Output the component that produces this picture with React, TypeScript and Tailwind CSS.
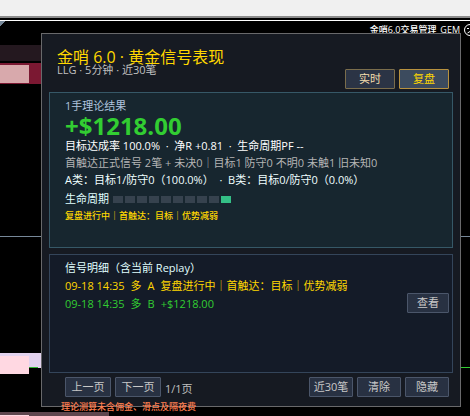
import { useState } from "react";

interface Signal {
  id: number;
  time: string;
  side: string;
  grade: string;
  result: string;
  color: string;
}

const signals: Signal[] = [
  {
    id: 1,
    time: "09-18 14:35",
    side: "多",
    grade: "A",
    result: "复盘进行中｜首触达：目标｜优势减弱",
    color: "text-[#ffd700]",
  },
  {
    id: 2,
    time: "09-18 14:35",
    side: "多",
    grade: "B",
    result: "+$1218.00",
    color: "text-[#32cd32]",
  },
];

const LIFECYCLE_STEPS = 10;

const buttonBase = "h-5 border rounded-[1px] text-[11px] leading-[18px] text-center";
const buttonPlain = "border-[#4b566a] bg-[#283142] text-[#c8c8c8]";

function ChartBackdrop() {
  return (
    <svg
      className="absolute inset-0 w-full h-full"
      shapeRendering="crispEdges"
      aria-hidden="true"
    >
      <rect x="0" y="20" width="100%" height="1" fill="#ffffff" />
      <path d="M0 21h5l-5 5z" fill="#778899" />
      <rect x="0" y="45" width="60" height="16" fill="#24181f" />
      <rect x="0" y="63" width="60" height="21" fill="#7b1832" />
      <rect x="0" y="65" width="29" height="18" fill="#d8a9ac" />
      <rect x="0" y="236" width="100%" height="1" fill="#778899" />
      <rect x="0" y="353" width="60" height="15" fill="#e2d2ee" />
      <rect x="29" y="367" width="9" height="1" fill="#32b432" />
      <rect x="0" y="356" width="29" height="18" fill="#ffd8e2" />
      <rect x="400" y="367" width="100%" height="1" fill="#32cd32" />
      <rect x="0" y="412" width="109" height="4" fill="#5f464e" />
      <rect x="0" y="415" width="29" height="1" fill="#ffd8e2" />
    </svg>
  );
}

export default function App() {
  const [mode, setMode] = useState("replay");

  const modeClass = (name: string) =>
    mode === name
      ? "border-[#b8923f] bg-[#3c4b5e] text-[#ffd700]"
      : "border-[#7a6d4c] bg-[#2b3445] text-[#f5dfae]";

  return (
    <div className="relative min-h-screen overflow-hidden bg-black font-['Open_Sans','Noto_Sans_CJK_SC',sans-serif] text-[11px]">
      <ChartBackdrop />

      {/* Window toolbar */}
      <div className="relative h-[18px] border-b-2 border-[#8c8c8c] bg-[#f0f0f0]" />

      {/* Expert advisor name */}
      <div className="relative flex h-[15px] items-center justify-end gap-1 pt-[9px] pl-10 text-[9px] leading-3 font-medium whitespace-nowrap text-white">
        <span>金哨6.0交易管理_GEM</span>
        <svg width="12" height="12" viewBox="0 0 12 12" fill="none" stroke="#fff" className="-mr-[6px]">
          <circle cx="6" cy="6" r="5.5" />
          <path d="M3 4.5h2M7 4.5h2M3.5 9q2.5-3 5 0" />
        </svg>
      </div>

      <main className="relative mr-[9px] ml-[41px] border border-[#69696b] bg-[#161a22] px-[7px] pb-[9px]">
        <header className="flex h-[58px] items-end justify-between pr-1 pb-[3px] pl-2">
          <div className="self-start pt-[13px]">
            <h1 className="text-base leading-5 text-[#ffd700]">金哨 6.0 · 黄金信号表现</h1>
            <p className="-mt-[5px] leading-4 text-[#c0c0c0]">LLG · 5分钟 · 近30笔</p>
          </div>
          <div className="flex gap-1">
            <button
              type="button"
              onClick={() => setMode("live")}
              className={`${buttonBase} w-[50px] ${modeClass("live")}`}
            >
              实时
            </button>
            <button
              type="button"
              onClick={() => setMode("replay")}
              className={`${buttonBase} w-[50px] ${modeClass("replay")}`}
            >
              复盘
            </button>
          </div>
        </header>

        {/* Summary */}
        <section className="h-[156px] border border-[#365867] bg-[#17262f] px-[15px] pt-1 whitespace-nowrap">
          <h2 className="leading-[18px] text-[#b0c4de]">1手理论结果</h2>
          <p className="text-2xl leading-[22px] font-bold text-[#32cd32]">+$1218.00</p>
          <p className="leading-[17px] text-white">
            目标达成率 100.0% &nbsp;·&nbsp; 净R +0.81 &nbsp;·&nbsp; 生命周期PF --
          </p>
          <p className="leading-[17px] text-[#b4b4b4]">
            首触达正式信号 2笔 + 未决0｜目标1 防守0 不明0 未触1 旧未知0
          </p>
          <p className="leading-[17px] text-[#f0ffff]">
            A类：目标1/防守0（100.0%） &nbsp;·&nbsp; B类：目标0/防守0（0.0%）
          </p>
          <div className="flex items-center gap-1 pt-[2px]">
            <span className="leading-[18px] text-[#e0ffff]">生命周期</span>
            <div className="flex gap-[2px]">
              {Array.from({ length: LIFECYCLE_STEPS }, (_, i) => (
                <span
                  key={i}
                  className={`h-[7px] w-[10px] ${i === LIFECYCLE_STEPS - 1 ? "bg-[#34bf86]" : "bg-[#36424e]"}`}
                />
              ))}
            </div>
          </div>
          <p className="text-[9px] leading-4 font-medium text-[#ffd700]">
            复盘进行中｜首触达：目标｜优势减弱
          </p>
        </section>

        {/* Signal list */}
        <section className="mt-[6px] h-[119px] border border-[#34455a] bg-[#141b28] pt-1 pr-[3px] pl-[15px] whitespace-nowrap">
          <h2 className="leading-[18px] text-[#e0ffff]">信号明细（含当前 Replay）</h2>
          <div className="flex justify-between">
            <ul>
              {signals.map((s) => (
                <li key={s.id} className={`flex gap-[6px] leading-[18px] ${s.color}`}>
                  <span>{s.time}</span>
                  <span>{s.side}</span>
                  <span>{s.grade}</span>
                  <span>{s.result}</span>
                </li>
              ))}
            </ul>
            <button type="button" className={`${buttonBase} ${buttonPlain} mt-4 w-[42px]`}>
              查看
            </button>
          </div>
        </section>

        <footer className="flex items-center gap-1 pt-1 pr-1 pl-4 whitespace-nowrap">
          <button type="button" className={`${buttonBase} ${buttonPlain} w-[46px]`}>
            上一页
          </button>
          <button type="button" className={`${buttonBase} ${buttonPlain} w-[46px]`}>
            下一页
          </button>
          <span className="mr-auto pt-1 leading-4 text-[#c0c0c0]">1/1页</span>
          <button type="button" className={`${buttonBase} ${buttonPlain} w-11`}>
            近30笔
          </button>
          <button type="button" className={`${buttonBase} ${buttonPlain} w-11`}>
            清除
          </button>
          <button type="button" className={`${buttonBase} ${buttonPlain} w-11`}>
            隐藏
          </button>
        </footer>
      </main>

      <p className="relative -mt-[6px] ml-[61px] text-[9px] leading-3 font-medium text-[#ff7f50]">
        理论测算未含佣金、滑点及隔夜费
      </p>
    </div>
  );
}
